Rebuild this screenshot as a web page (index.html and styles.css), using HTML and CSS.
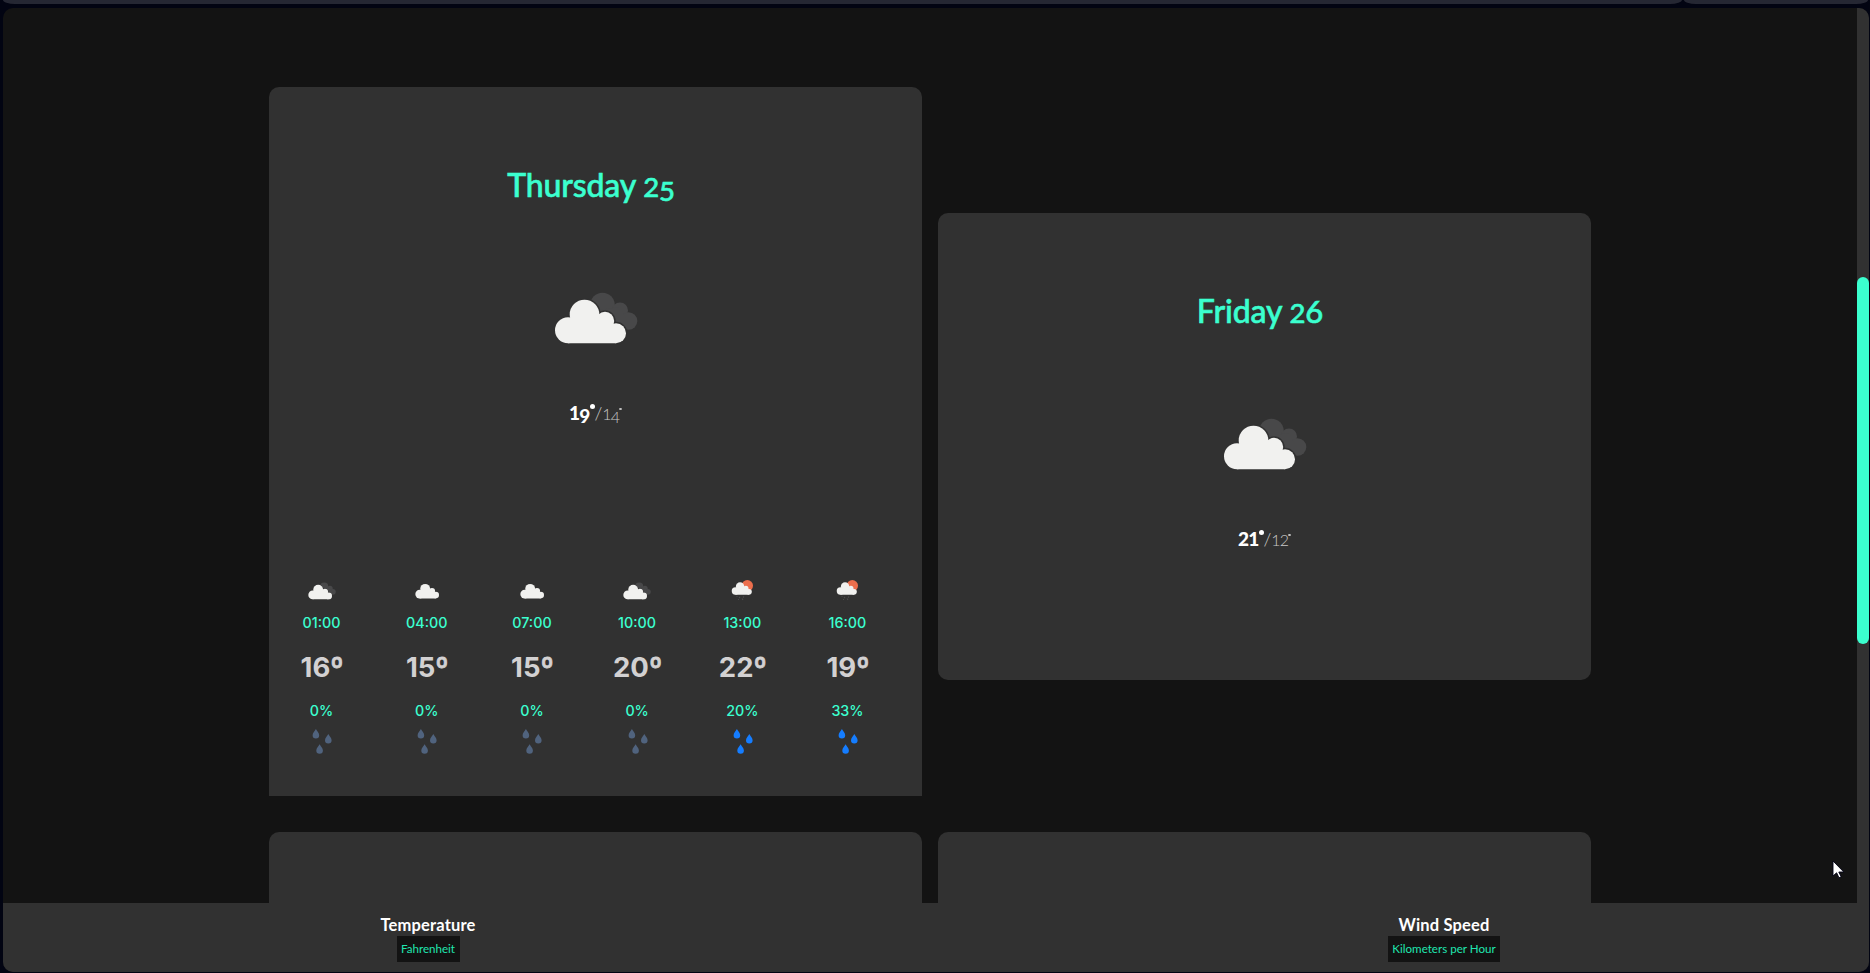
FILE: index.html
```html
<!DOCTYPE html>
<html lang="en">
<head>
<meta charset="utf-8">
<title>Weather forecast</title>
<link rel="stylesheet" href="styles.css">
</head>
<body>
<svg class="defs" aria-hidden="true">
  <defs>
    <g id="cloud">
      <circle cx="88" cy="180.3" r="13"/><circle cx="104.5" cy="164.5" r="14.8"/><circle cx="125" cy="171" r="9.2"/><circle cx="136" cy="183.3" r="10"/>
      <path d="M88 193.3V172l4-4h33l11 8v17.3z"/>
    </g>
    <g id="back-cloud">
      <circle cx="122.5" cy="155" r="12.3"/><circle cx="140" cy="160.5" r="8"/><circle cx="148.5" cy="171" r="8.8"/><path d="M118 160l22-3 10 20h-12z"/>
    </g>
    <symbol id="overcast" viewBox="74 142 84 53">
      <use href="#back-cloud" fill="#484849"/>
      <use href="#cloud" fill="#313131" stroke="#313131" stroke-width="3"/>
      <use href="#cloud" fill="#f1f1ef"/>
    </symbol>
    <symbol id="cloudy" viewBox="74 148 72 46"><use href="#cloud" fill="#f1f1ef"/></symbol>
    <symbol id="shower" viewBox="0 0 22 21">
      <circle cx="16.3" cy="5.8" r="5.7" fill="#ec6e4c"/>
      <use href="#cloud" fill="#f1f1ef" transform="translate(-20.5 -40) scale(.283)"/>
      <path d="M5.5 16.5h1M9 17l-1 1M13 16.5l-1 1M7 19.5h1M11 18.5l1 1.5" stroke="#4b4b4c" stroke-width="1.1"/>
    </symbol>
    <path id="drop" d="M0 0C1 2.2 3.3 4 3.3 6.2A3.3 3.3 0 0 1-3.3 6.2C-3.3 4-1 2.2 0 0z"/>
    <symbol id="rain" viewBox="0 0 20 25"><use href="#drop" x="3.9" y="0"/><use href="#drop" x="16.3" y="5"/><use href="#drop" x="7.6" y="15.2"/></symbol>
  </defs>
</svg>
<div class="tabs"><div class="tab tab-main"></div><div class="tab tab-side"></div></div>
<div class="window">
  <main class="view">
    <div class="days">
      <section class="card card-open">
        <h2>Thursday <span class="num">2<span class="low">5</span></span></h2>
        <svg class="sky"><use href="#overcast"/></svg>
        <p class="range"><b>1<span class="low">9</span><i class="deg"></i></b><span class="min"><span class="slash">/</span>1<span class="low">4</span><i class="deg"></i></span></p>
        <div class="hours">
          <div class="hour"><div class="icon"><svg class="i-over"><use href="#overcast"/></svg></div><time>01:00</time><strong>16<span class="ord">º</span></strong><span class="chance">0%</span><svg class="rain"><use href="#rain"/></svg></div>
          <div class="hour"><div class="icon"><svg class="i-cloud"><use href="#cloudy"/></svg></div><time>04:00</time><strong>15<span class="ord">º</span></strong><span class="chance">0%</span><svg class="rain"><use href="#rain"/></svg></div>
          <div class="hour"><div class="icon"><svg class="i-cloud"><use href="#cloudy"/></svg></div><time>07:00</time><strong>15<span class="ord">º</span></strong><span class="chance">0%</span><svg class="rain"><use href="#rain"/></svg></div>
          <div class="hour"><div class="icon"><svg class="i-over"><use href="#overcast"/></svg></div><time>10:00</time><strong>20<span class="ord">º</span></strong><span class="chance">0%</span><svg class="rain"><use href="#rain"/></svg></div>
          <div class="hour"><div class="icon"><svg class="i-shower"><use href="#shower"/></svg></div><time>13:00</time><strong>22<span class="ord">º</span></strong><span class="chance">20%</span><svg class="rain wet"><use href="#rain"/></svg></div>
          <div class="hour"><div class="icon"><svg class="i-shower"><use href="#shower"/></svg></div><time>16:00</time><strong>19<span class="ord">º</span></strong><span class="chance">33%</span><svg class="rain wet"><use href="#rain"/></svg></div>
        </div>
      </section>
      <section class="card card-closed">
        <h2>Friday <span class="num">2<span class="tall">6</span></span></h2>
        <svg class="sky"><use href="#overcast"/></svg>
        <p class="range"><b>21<i class="deg"></i></b><span class="min"><span class="slash">/</span>12<i class="deg"></i></span></p>
      </section>
      <section class="card card-next"></section>
      <section class="card card-next"></section>
    </div>
    <footer class="units">
      <div class="unit"><h3>Temperature</h3><button>Fahrenheit</button></div>
      <div class="unit"><h3 class="wind">Wind Speed</h3><button class="kph">Kilometers per Hour</button></div>
    </footer>
  </main>
  <div class="scrollbar"><div class="thumb"></div></div>
</div>
<svg class="cursor" viewBox="0 0 14 20"><path d="M1 1v15l3.6-3.2 2.4 5 2.2-1-2.4-4.8h5z" fill="#fff" stroke="#000014" stroke-width=".9"/></svg>
</body>
</html>
```
FILE: styles.css
```css
* { box-sizing: border-box; }
body { margin: 0; height: 973px; overflow: hidden; background: #020412; font-family: Lato, sans-serif; color: #fff; }
h2, h3, p { margin: 0; }
.defs { position: absolute; width: 0; height: 0; }
svg { display: block; flex: none; }

.tabs { display: flex; gap: 2px; height: 8px; padding: 0 2px 4px 3px; }
.tab { background: #252733; border-radius: 0 0 12px 12px / 0 0 4px 4px; }
.tab-main { width: 1679px; }
.tab-side { flex: 1; }

.window { display: flex; height: 964px; margin: 0 1px 0 3px; border-radius: 10px; overflow: hidden; background: #131313; }
.view { flex: 1; display: flex; flex-direction: column; }
.days { height: 895px; overflow: hidden; padding: 79px 0 0 266px; display: grid; grid-template-columns: 653px 653px; grid-template-rows: 709px 200px; gap: 36px 16px; align-items: center; }
.scrollbar { width: 12px; background: #313131; padding-top: 269px; }
.thumb { height: 367px; border-radius: 6px; background: #3bffcf; }

.card { display: flex; flex-direction: column; align-items: center; background: #313131; border-radius: 10px; padding-top: 78px; }
.card-open { height: 709px; border-radius: 10px 10px 0 0; }
.card-closed { height: 467px; margin-top: 10px; }
.card-next { height: 200px; }
.card h2 { height: 40px; line-height: 40px; margin-right: 9px; font-size: 32px; font-weight: 500; letter-spacing: -.15px; -webkit-text-stroke: .6px #3bffcf; color: #3bffcf; white-space: nowrap; }
.num { font-size: 27.5px; line-height: 0; }
.num .low { vertical-align: -4px; }
.num .tall { font-size: 31px; }
.sky { width: 84px; height: 53px; margin-top: 87px; }
.range { display: flex; height: 24px; margin-top: 55px; line-height: 24px; white-space: nowrap; }
.range b { font-weight: 900; font-size: 19px; line-height: 25px; letter-spacing: -.8px; }
.low { vertical-align: -3px; line-height: 0; }
.deg { display: inline-block; width: 5px; height: 5px; border-radius: 50%; background: #fff; vertical-align: 11px; }
.min { font-weight: 300; font-size: 16px; line-height: 27px; letter-spacing: -1px; color: #c8c8c8; }
.min .slash { font-size: 18px; line-height: 0; letter-spacing: 0; }
.min .deg { width: 3px; height: 2px; vertical-align: 10px; background: #c8c8c8; }

.hours { display: flex; width: 631px; margin-top: 146px; align-self: flex-start; font-family: Inter, sans-serif; }
.hour { flex: 1; display: flex; flex-direction: column; align-items: center; }
.icon { display: flex; justify-content: center; height: 40px; padding-top: 12px; }
.i-over { width: 28px; height: 18px; }
.i-cloud { width: 24px; height: 16px; margin-top: 1px; }
.i-shower { width: 22px; height: 21px; margin-top: -2px; }
.hour time, .chance { height: 24px; line-height: 25px; font-size: 14.3px; font-weight: 500; color: #3bffcf; }
.hour strong { height: 36px; margin: 15px 0 13px 1px; line-height: 36px; font-size: 27.5px; font-weight: 700; color: #d3d1d2; }
.ord { -webkit-text-stroke: .8px #d3d1d2; }
.rain { width: 20px; height: 25px; margin: 7px 0 0 1px; fill: #50637e; }
.wet { fill: #157dff; }

.units { height: 69px; display: flex; justify-content: space-between; padding: 6px 332px 0 344px; background: #313131; }
.unit { width: 162px; display: flex; flex-direction: column; align-items: center; }
.unit h3 { height: 27px; line-height: 32px; font-size: 16.5px; font-weight: 700; letter-spacing: .15px; }
.unit button { width: 63px; height: 26px; padding: 0; border: 0; background: #131313; color: #20e6b0; font: 400 11.6px/24px Lato, sans-serif; }
.unit .kph { width: 112px; }
.cursor { position: absolute; left: 1832px; top: 860px; width: 14px; height: 20px; }
```
